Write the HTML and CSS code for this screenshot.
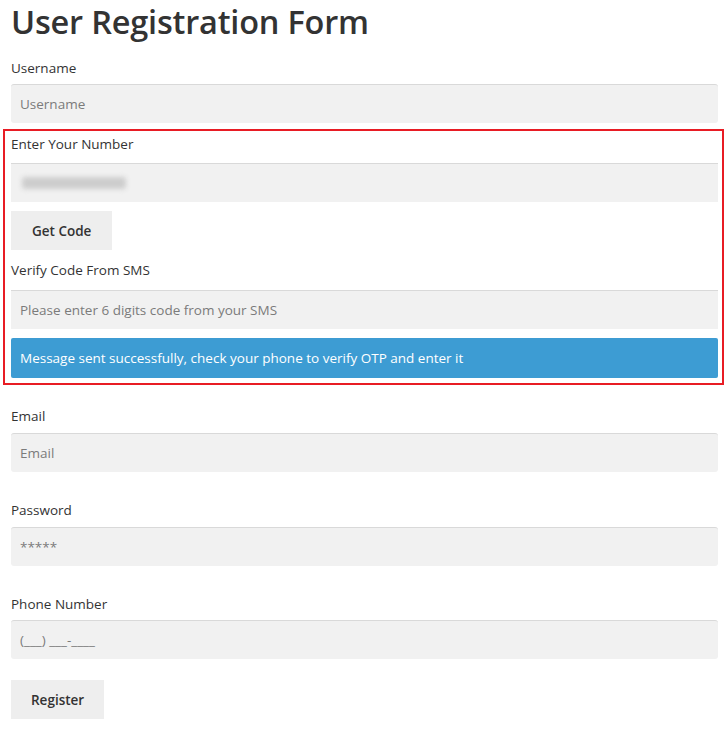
FILE: index.html
```html
<!DOCTYPE html>
<html lang="en">
<head>
<meta charset="utf-8">
<title>User Registration Form</title>
<link rel="stylesheet" href="styles.css">
</head>
<body>
<main class="page">
  <h1 class="title">User Registration Form</h1>

  <label class="label label-first" for="username">Username</label>
  <input class="input input-round input-tight" id="username" type="text" placeholder="Username">

  <section class="otp-box">
    <label class="label label-box-first" for="number">Enter Your Number</label>
    <div class="input input-gap masked" id="number"><span class="blur"></span></div>
    <button class="btn btn-gap" type="button">Get Code</button>
    <label class="label label-verify" for="code">Verify Code From SMS</label>
    <input class="input input-gap input-code" id="code" type="text" placeholder="Please enter 6 digits code from your SMS">
    <div class="alert">Message sent successfully, check your phone to verify OTP and enter it</div>
  </section>

  <label class="label label-after-box" for="email">Email</label>
  <input class="input input-round input-mid" id="email" type="text" placeholder="Email">

  <label class="label label-spaced" for="password">Password</label>
  <input class="input input-round input-mid" id="password" type="text" placeholder="*****">

  <label class="label label-spaced" for="phone">Phone Number</label>
  <input class="input input-round input-tight" id="phone" type="text" placeholder="(___) ___-____">

  <button class="btn btn-register" type="button">Register</button>
</main>
</body>
</html>
```

FILE: styles.css
```css
* {
  box-sizing: border-box;
}

html, body {
  margin: 0;
  padding: 0;
  background: #ffffff;
}

body {
  font-family: "Open Sans", "Noto Sans", "Liberation Sans", sans-serif;
  font-size: 13.5px;
  color: #333333;
}

.page {
  display: flex;
  flex-direction: column;
  align-items: stretch;
  padding: 0 10px 0 11px;
}

.title {
  margin: 0;
  font-size: 32.5px;
  line-height: 44px;
  font-weight: 600;
  color: #333333;
  letter-spacing: -0.2px;
}

.label {
  display: block;
  line-height: 20px;
  font-size: 13.5px;
  color: #333333;
}

.label-first { margin-top: 14px; }
.label-box-first { margin-top: 3px; }
.label-verify { margin-top: 10px; }
.label-after-box { margin-top: 21px; }
.label-spaced { margin-top: 28px; }

.input {
  display: block;
  width: 100%;
  height: 39px;
  margin: 0;
  padding: 0 9px;
  border: none;
  border-top: 1px solid #d9d9d9;
  background: #f1f1f1;
  font-family: inherit;
  font-size: 13.5px;
  color: #333333;
  outline: none;
  border-radius: 0;
}

.input::placeholder {
  color: #7b7b7b;
  opacity: 1;
}

.input-round { border-radius: 3px; }
.input-tight { margin-top: 6px; }
.input-mid { margin-top: 7px; }
.input-gap { margin-top: 9px; }
.input-code { margin-top: 10px; }

.masked {
  display: flex;
  align-items: center;
}

.blur {
  display: block;
  width: 104px;
  height: 12px;
  margin-left: 2px;
  background: #cdcdcd;
  border-radius: 3px;
  filter: blur(2.5px);
}

.otp-box {
  display: flex;
  flex-direction: column;
  align-items: stretch;
  margin: 6px -6px 0 -8px;
  padding: 0 4px 5px 6px;
  border: 2px solid #e81c24;
}

.btn {
  align-self: flex-start;
  height: 39px;
  padding: 0 21px;
  border: none;
  background: #eeeeee;
  font-family: inherit;
  font-size: 13.5px;
  font-weight: 600;
  color: #333333;
  cursor: pointer;
}

.btn-gap { margin-top: 9px; }
.btn-register {
  margin-top: 21px;
  padding: 0 20px;
}

.alert {
  margin-top: 9px;
  height: 40px;
  line-height: 40px;
  padding: 0 9px;
  background: #3d9cd3;
  color: #ffffff;
  border-radius: 2px;
  font-size: 13.5px;
}
```
